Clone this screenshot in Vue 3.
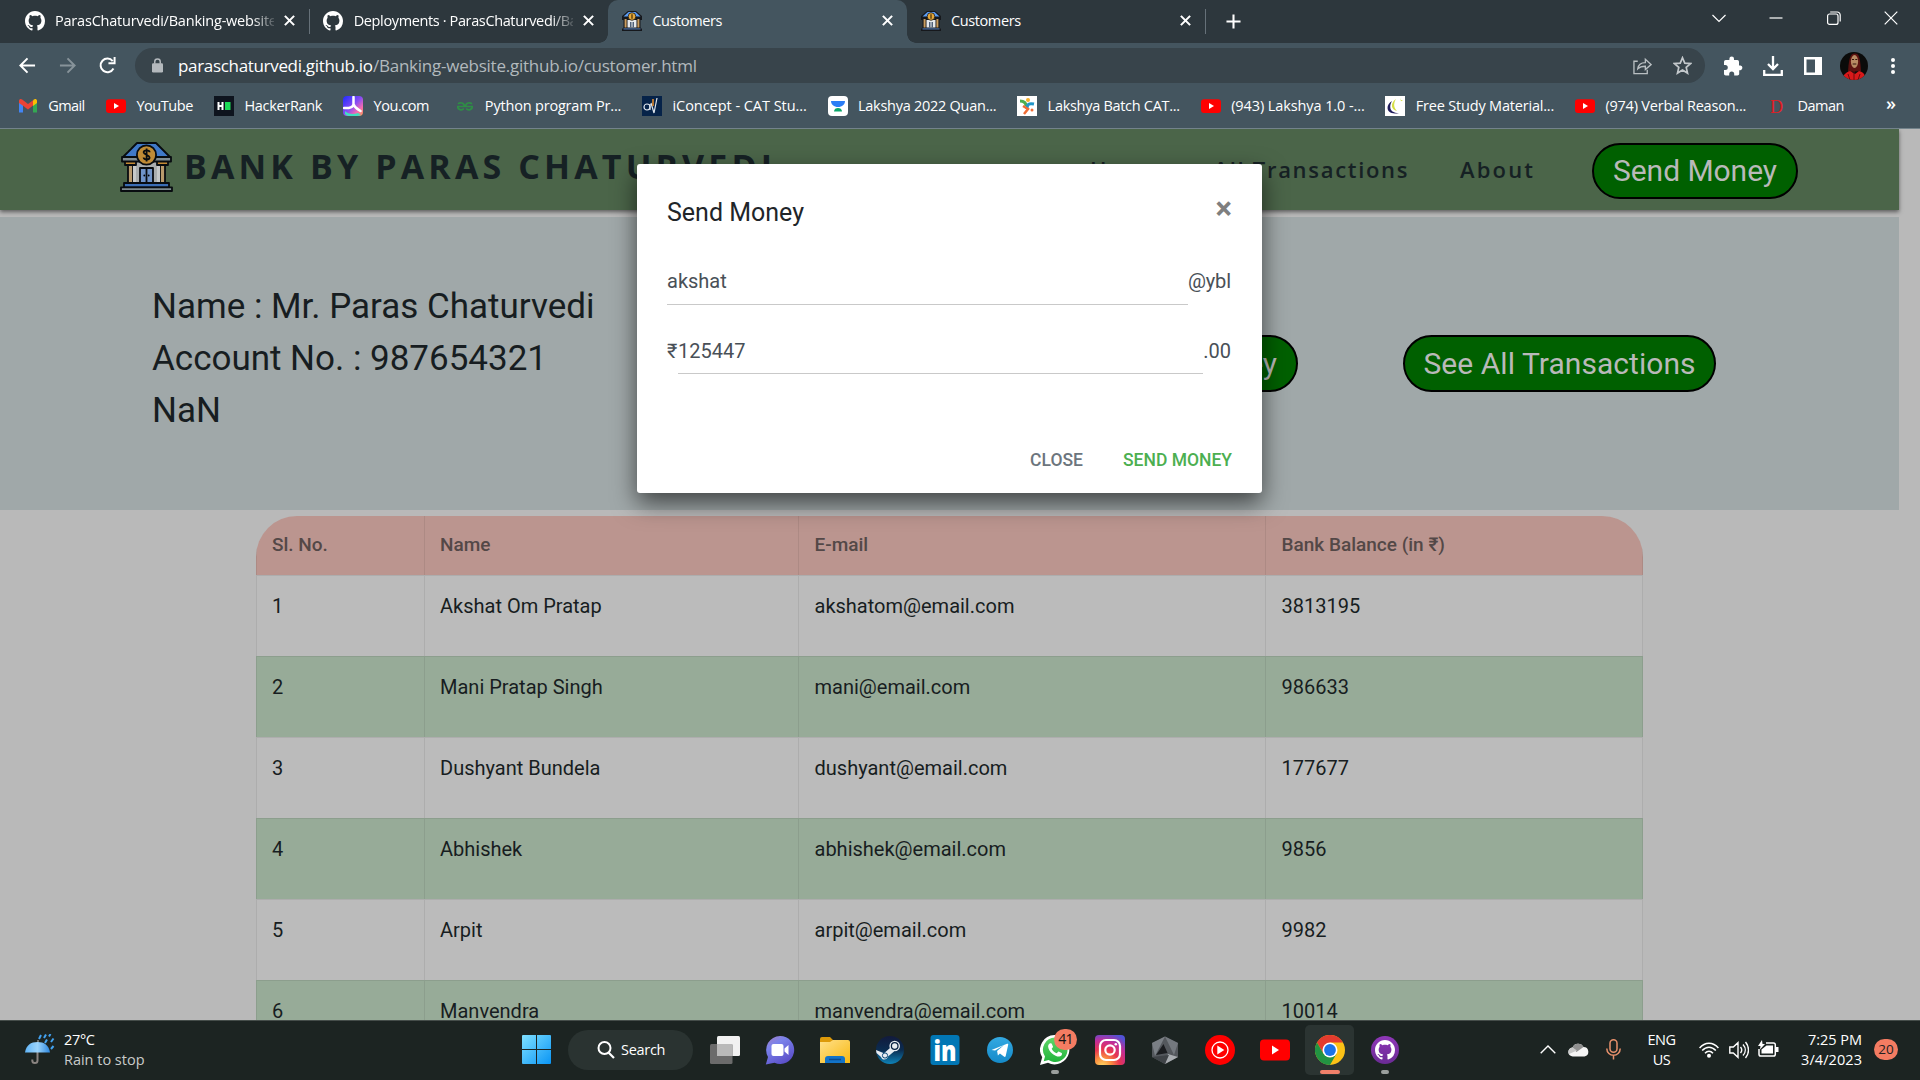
<script setup>
import { nextTick } from 'vue'

// Tracks a label so that its text takes exactly the given width.
const vFit = {
  mounted(el, { value }) {
    nextTick(() => {
      const count = [...el.textContent].length
      const width = el.getBoundingClientRect().width
      const spacing = (value - width) / (count - 1)
      el.style.letterSpacing = `${spacing}px`
      el.style.marginRight = `${-spacing}px`
    })
  },
}

const tabs = [
  { icon: 'github', title: 'ParasChaturvedi/Banking-website', cut: true, w: 222 },
  { icon: 'github', title: 'Deployments · ParasChaturvedi/Ba', cut: true, w: 224 },
  { icon: 'bankfav', title: 'Customers', active: true, w: 70 },
  { icon: 'bankfav', title: 'Customers', w: 70 },
]

const bookmarks = [
  { icon: 'gmail', text: 'Gmail', w: 37 },
  { icon: 'youtube', text: 'YouTube', w: 57 },
  { icon: 'hacker', text: 'HackerRank', w: 78 },
  { icon: 'you', text: 'You.com', w: 56 },
  { icon: 'gfg', text: 'Python program Pr...', w: 136.5 },
  { icon: 'iconcept', text: 'iConcept - CAT Stu...', w: 134.5 },
  { icon: 'unacademy', text: 'Lakshya 2022 Quan...', w: 138.5 },
  { icon: 'cracku', text: 'Lakshya Batch CAT...', w: 132.5 },
  { icon: 'youtube', text: '(943) Lakshya 1.0 -...', w: 133.5 },
  { icon: 'study', text: 'Free Study Material...', w: 138.5 },
  { icon: 'youtube', text: '(974) Verbal Reason...', w: 141 },
  { icon: 'daman', text: 'Daman', w: 47 },
]

const rows = [
  ['1', 'Akshat Om Pratap', 'akshatom@email.com', '3813195'],
  ['2', 'Mani Pratap Singh', 'mani@email.com', '986633'],
  ['3', 'Dushyant Bundela', 'dushyant@email.com', '177677'],
  ['4', 'Abhishek', 'abhishek@email.com', '9856'],
  ['5', 'Arpit', 'arpit@email.com', '9982'],
  ['6', 'Manvendra', 'manvendra@email.com', '10014'],
]

const apps = ['taskview', 'chat', 'folder', 'steam', 'linkedin', 'telegram', 'whatsapp', 'instagram', 'armoury', 'ytmusic', 'ytbig', 'chrome', 'ghdesk']
</script>

<template>
  <div class="screen">
    <svg class="defs" width="0" height="0" aria-hidden="true">
      <defs>
        <linearGradient id="gWin" x1="0" y1="0" x2="1" y2="1"><stop offset="0" stop-color="#7fe0ff" /><stop offset="1" stop-color="#0a95f5" /></linearGradient>
        <linearGradient id="gChat" x1="0" y1="0" x2=".6" y2="1"><stop offset="0" stop-color="#a77fc0" /><stop offset=".35" stop-color="#7b83eb" /><stop offset="1" stop-color="#5b4fc9" /></linearGradient>
        <linearGradient id="gFold" x1="0" y1="0" x2="1" y2="1"><stop offset="0" stop-color="#ffe08a" /><stop offset="1" stop-color="#f8b912" /></linearGradient>
        <linearGradient id="gSteam" x1="0" y1="0" x2="0" y2="1"><stop offset="0" stop-color="#121a3c" /><stop offset=".5" stop-color="#0b2c50" /><stop offset="1" stop-color="#0e83b9" /></linearGradient>
        <linearGradient id="gTele" x1="0" y1="0" x2="0" y2="1"><stop offset="0" stop-color="#33a9e2" /><stop offset="1" stop-color="#158ac9" /></linearGradient>
        <linearGradient id="gWa" x1="0" y1="0" x2="0" y2="1"><stop offset="0" stop-color="#5fd668" /><stop offset="1" stop-color="#22b43c" /></linearGradient>
        <radialGradient id="gInsta" cx=".25" cy="1.05" r="1.15"><stop offset="0" stop-color="#ffdd66" /><stop offset=".25" stop-color="#fb9140" /><stop offset=".5" stop-color="#e8354f" /><stop offset=".75" stop-color="#c42d97" /><stop offset="1" stop-color="#5252d6" /></radialGradient>
        <linearGradient id="gGh" x1="0" y1="0" x2="0" y2="1"><stop offset="0" stop-color="#8f37b8" /><stop offset="1" stop-color="#6a2b94" /></linearGradient>
        <linearGradient id="gYou" x1="0" y1="0" x2="1" y2="1"><stop offset="0" stop-color="#1d2bff" /><stop offset=".5" stop-color="#8a4df2" /><stop offset=".75" stop-color="#f46bb0" /><stop offset="1" stop-color="#ff9a4d" /></linearGradient>
        <linearGradient id="gUmb" x1="0" y1="0" x2="1" y2="0"><stop offset="0" stop-color="#5fb4f7" /><stop offset=".5" stop-color="#9bd4fc" /><stop offset="1" stop-color="#2c87e0" /></linearGradient>
      </defs>

      <symbol id="github" viewBox="0 0 16 16"><path fill="#fff" d="M8 0C3.58 0 0 3.58 0 8c0 3.54 2.29 6.53 5.47 7.59.4.07.55-.17.55-.38 0-.19-.01-.82-.01-1.49-2.01.37-2.53-.49-2.69-.94-.09-.23-.48-.94-.82-1.13-.28-.15-.68-.52-.01-.53.63-.01 1.08.58 1.23.82.72 1.21 1.87.87 2.33.66.07-.52.28-.87.51-1.07-1.78-.2-3.64-.89-3.64-3.95 0-.87.31-1.59.82-2.15-.08-.2-.36-1.02.08-2.12 0 0 .67-.21 2.2.82.64-.18 1.32-.27 2-.27.68 0 1.36.09 2 .27 1.53-1.04 2.2-.82 2.2-.82.44 1.1.16 1.92.08 2.12.51.56.82 1.27.82 2.15 0 3.07-1.87 3.75-3.65 3.95.29.25.54.73.54 1.48 0 1.07-.01 1.93-.01 2.2 0 .21.15.46.55.38A8.013 8.013 0 0016 8c0-4.42-3.58-8-8-8z" /></symbol>

      <symbol id="bank" viewBox="0 0 53 51">
        <g stroke="#080c10" stroke-width="1.8" stroke-linejoin="round">
          <path fill="#4079c8" d="M3 16 17 2h19l14 14z" />
          <path fill="#a9adae" d="M12 20h29v22H12z" />
          <path fill="#b99a6c" d="M8 24h5v18H8zM40 24h5v18h-5z" />
          <path fill="#c6c9c9" d="M13 24h3v18h-3zM37 24h3v18h-3z" stroke="none" />
          <path fill="#c48a35" d="M5 20h11v4H5zM37 20h11v4H37z" />
          <path fill="#7f8c92" d="M2 16h49v4.500H2z" />
          <path fill="#6f93c8" d="M20 27h6.500v15H20zM26.500 27H33v15h-6.500z" />
          <path fill="#3a6db5" d="M4 42h45v4.500H4z" />
          <path fill="#7f8c92" d="M1 46.300h51V50H1z" />
          <circle cx="26.500" cy="14" r="9.600" fill="#bf8b36" />
        </g>
        <path d="M10 6 6 10" stroke="#4b6549" stroke-width="2.200" stroke-dasharray="2 2" />
        <path d="M29.600 11.300c0-2.600-6-2.600-6 0s6 2.600 6 5.200-6 2.600-6 0M26.600 7.600v12.800" fill="none" stroke="#080c10" stroke-width="1.800" />
        <circle cx="24.300" cy="34.500" r=".9" /><circle cx="28.700" cy="34.500" r=".9" />
      </symbol>

      <symbol id="bankfav" viewBox="0 0 20 20">
        <path fill="#16181c" d="M6 0h8l6 5v4h-1.500v7.500L20 18v2H0v-2l1.500-1.500V9H0V5z" />
        <path fill="#5b9cf2" d="M6.500 1h7l5 4.500h-17z" />
        <path fill="#e6e9ec" d="M5.500 9h9v7.500h-9z" />
        <path fill="#c99b5c" d="M2.600 8h2v8.500h-2zM15.400 8h2v8.500h-2z" />
        <path fill="#4f6078" d="M8 11h1.500v5.500H8zM10.500 11H12v5.500h-1.500z" />
        <path fill="#4a6fa5" d="M1.500 17.300h17v1.200h-17z" />
        <circle cx="10" cy="5.500" r="3.800" fill="#e7a93a" stroke="#16181c" stroke-width=".8" />
        <path d="M10 3.300v4.400" stroke="#4a3208" stroke-width="1.300" />
      </symbol>

      <symbol id="gmail" viewBox="0 0 20 20"><path d="M1 5v11.500h4V9z" fill="#4285f4" /><path d="M19 5v11.500h-4V9z" fill="#34a853" /><path d="M15 4.500V10l4-3V4.800C19 3 17 2.500 15.800 3.500z" fill="#fbbc04" /><path d="M1 7V4.800C1 3 3 2.500 4.200 3.500L10 8l5-3.800V9.500l-5 3.900L5 9.700z" fill="#ea4335" /></symbol>
      <symbol id="youtube" viewBox="0 0 20 20"><rect y="3.200" width="20" height="13.800" rx="3" fill="#f00" /><path d="M8 7v6l5-3z" fill="#fff" /></symbol>
      <symbol id="hacker" viewBox="0 0 20 20"><path d="M0 0h20v20H0z" fill="#0e141e" /><path d="M3.500 6h2v3h2V6h2v8h-2v-3h-2v3h-2z" fill="#fff" /><path d="M11 6h5.500v8H11z" fill="#1ddb57" /></symbol>
      <symbol id="you" viewBox="0 0 20 20"><rect width="20" height="20" rx="4" fill="url(#gYou)" /><path d="M2 15c3 3 8 4 13 2l3 2c-4 2-14 2-16-1z" fill="#3fe0c0" /><path d="M10.500 1v7c0 3-4 4.500-9.500 4M10.500 8c1 4 4 5 7 7" stroke="#fff" stroke-width="2.500" fill="none" stroke-linecap="round" /></symbol>
      <symbol id="gfg" viewBox="0 0 20 20"><path d="M2 10.500h16M8.800 12.500c-2 2.600-6.300 1-6-2M3 7.800c2-1.600 6.400-1.400 6.400 2.700M11.200 12.500c2 2.600 6.300 1 6-2M17 7.800c-2-1.600-6.400-1.400-6.400 2.700" fill="none" stroke="#2f8d46" stroke-width="1.700" /></symbol>
      <symbol id="iconcept" viewBox="0 0 20 20"><path d="M0 0h20v20H0z" fill="#062349" /><circle cx="5" cy="11" r="3" fill="none" stroke="#dfe6ee" stroke-width="1.200" /><path d="M8 8v6M9 7l3 10 3-15" fill="none" stroke="#dfe6ee" stroke-width="1.200" /><path d="M11 3v7" stroke="#e08a2c" stroke-width="1.600" /></symbol>
      <symbol id="unacademy" viewBox="0 0 20 20"><rect width="20" height="20" rx="4" fill="#fff" /><path d="M3 5h14c0 3.500-3 6-7 6S3 8.500 3 5z" fill="#2b7df5" /><path d="M6 15.500c0-2.500 2-3.500 4-3.500s4 1 4 3.500z" fill="#0aa66a" /></symbol>
      <symbol id="cracku" viewBox="0 0 20 20"><path d="M0 0h20v20H0z" fill="#fff" /><path d="M3 5c4 0 6 2 6 5" stroke="#4caf50" stroke-width="3" fill="none" /><path d="M17 8c-5-1-7 0-7 5" stroke="#2196c9" stroke-width="3" fill="none" /><path d="m6 10 5 3-4 5" stroke="#ef6c35" stroke-width="2.500" fill="none" /><circle cx="11" cy="4" r="2" fill="#f6b22c" /><circle cx="15" cy="14" r="1.500" fill="#ef6c35" /></symbol>
      <symbol id="study" viewBox="0 0 20 20"><path d="M0 0h20v20H0z" fill="#fff" /><path d="M7 5C-1 10 2 20 14 17 6 17 3 12 7 5z" fill="#201d5c" /><path d="M11 3c-6 4-5 11 1 12-3-3-4-7-1-12z" fill="#d5de42" /><path d="m15 2 1 2 2 .3-2 1" fill="#d5de42" /></symbol>
      <symbol id="daman" viewBox="0 0 20 20"><text x="3" y="16.500" font-family="Liberation Serif, serif" font-size="18" fill="#e31e24">D</text></symbol>

      <symbol id="taskview" viewBox="0 0 30 30"><rect x="7" y="1" width="23" height="20" rx="1.500" fill="#f1f1f1" /><rect x="0" y="9" width="22.500" height="20" rx="1.500" fill="#6b6b6b" /><path d="M7 9h15.500v12H7z" fill="#b9b9b9" /></symbol>
      <symbol id="chat" viewBox="0 0 30 30"><path d="M15 1a14 14 0 1 1-5.500 26.800L.8 29.500 3 22A14 14 0 0 1 15 1z" fill="url(#gChat)" /><rect x="6.500" y="9" width="12" height="12" rx="2" fill="#fff" /><path d="m19.500 13.500 4-3.500v10l-4-3.500z" fill="#fff" /></symbol>
      <symbol id="folder" viewBox="0 0 30 30"><path d="M0 4a2 2 0 0 1 2-2h8l3 3h5v8H0z" fill="#dd9a0a" /><path d="M0 7h10l3-2h15a2 2 0 0 1 2 2v21H0z" fill="url(#gFold)" /><path d="M5 28v-4a3 3 0 0 1 3-3h14a3 3 0 0 1 3 3v4z" fill="#1273c8" /><path d="M9 24.500h12" stroke="#0a4b90" stroke-width="1.500" /></symbol>
      <symbol id="steam" viewBox="0 0 30 30"><circle cx="15" cy="15" r="14" fill="url(#gSteam)" /><path d="m1 15 8 3.300 6-5.300 5-2-1 5.500-6 5c-1 4-6 4-7 .5L1.500 18z" fill="#e9edf2" /><circle cx="19.700" cy="11" r="5.300" fill="#e9edf2" /><circle cx="19.700" cy="11" r="3.300" fill="#e9edf2" stroke="#0b2444" stroke-width="1.300" /><circle cx="10" cy="20.500" r="2.600" fill="none" stroke="#0d4a78" stroke-width="1" /></symbol>
      <symbol id="linkedin" viewBox="0 0 30 30"><rect x=".5" width="29" height="30" rx="3" fill="#0277b5" /><text x="3.500" y="25.500" font-family="Open Sans, sans-serif" font-weight="800" font-size="28" textLength="23" lengthAdjust="spacingAndGlyphs" fill="#fff">in</text></symbol>
      <symbol id="telegram" viewBox="0 0 30 30"><circle cx="15" cy="15" r="13" fill="url(#gTele)" /><path d="m6.500 15 15.500-6.200c1-.3 1.400.2 1.200 1L20.700 21c-.3 1-1 1.200-1.800.6l-4-3-2 2-.8-4.600 7-6-9 5.500z" fill="#fff" /></symbol>
      <symbol id="whatsapp" viewBox="0 0 30 30"><path d="M15 0a14.700 14.700 0 1 1-7 27.800L0 30l2.200-7.700A14.700 14.700 0 0 1 15 0z" fill="#fff" /><path d="M15 2.600A12.200 12.200 0 1 1 8.600 25L3.700 26.300 5 21.500A12.200 12.200 0 0 1 15 2.600z" fill="url(#gWa)" /><path d="M10.500 8.200c.8 0 1.200.1 1.500 1l1 2.600c.1.500-1 1.600-1.300 2 .9 2 2.800 3.600 4.900 4.500.6-.3 1.500-2 2.100-1.900l3 1.500c.6.300.2 2-.3 2.700-3 3.400-13-3-13.300-9.200.1-1.700 1.100-3.200 2.400-3.200z" fill="#fff" /></symbol>
      <symbol id="instagram" viewBox="0 0 30 30"><rect width="30" height="30" rx="4" fill="url(#gInsta)" /><rect x="5" y="5" width="20" height="20" rx="6" fill="none" stroke="#fff" stroke-width="2.200" /><circle cx="15" cy="15" r="4.700" fill="none" stroke="#fff" stroke-width="2.200" /><circle cx="20.800" cy="9.300" r="1.300" fill="#fff" /></symbol>
      <symbol id="armoury" viewBox="0 0 30 30"><path d="M15 1.500 28 8v14l-13 7L2 22V8z" fill="#54585d" /><path d="M15 1.500 28 8l-4 12z" fill="#74797f" /><path d="M2 8 15 1.500 5 21z" fill="#7a7f85" /><path d="m15 29 13-7-10-3z" fill="#a9adb1" /><path d="M13.500 9 6 20l11.500-2z" fill="#1b1d20" /><path d="M2 22 15 29l4-9z" fill="#3f4347" /></symbol>
      <symbol id="ytmusic" viewBox="0 0 30 30"><circle cx="15" cy="15" r="15" fill="#f00" /><circle cx="15" cy="15" r="8" fill="none" stroke="#fff" stroke-width="1.300" /><path d="M12.300 10.500v9l7-4.500z" fill="#fff" /></symbol>
      <symbol id="ytbig" viewBox="0 0 30 30"><rect y="4.500" width="30" height="21" rx="4" fill="#f00" /><path d="M12 10.500v9l7-4.500z" fill="#fff" /></symbol>
      <symbol id="chrome" viewBox="0 0 30 30"><circle cx="15" cy="15" r="15" fill="#fbc116" /><path d="M2 7.500A15 15 0 0 1 28 7.500H15L8.500 18.700z" fill="#e33b2e" /><path d="M2 7.500A15 15 0 0 0 15 30l6.500-11.300L15 15l-6.500 3.700z" fill="#229342" /><circle cx="15" cy="15" r="7.500" fill="#fff" /><circle cx="15" cy="15" r="5.900" fill="#1a73e8" /></symbol>
      <symbol id="ghdesk" viewBox="0 0 30 30"><circle cx="15" cy="15" r="14" fill="url(#gGh)" /><svg x="5" y="5" width="20" height="20" viewBox="0 0 16 16"><use href="#github" /></svg></symbol>
    </svg>

    <header class="tabstrip">
      <div v-for="(t, i) in tabs" :key="i" class="tab" :class="{ active: t.active, parted: i === 0 || i === 3 }">
        <svg class="fav"><use :href="'#' + t.icon" /></svg>
        <div class="tab-title" :class="{ cut: t.cut }"><span v-fit="t.w" class="fit">{{ t.title }}</span></div>
        <svg class="tab-x" viewBox="0 0 10 10"><path d="m.8.8 8.400 8.400M9.200.8.8 9.200" stroke="#fff" stroke-width="1.900" /></svg>
      </div>
      <svg class="plus" viewBox="0 0 16 16"><path d="M8 .5v15M.5 8h15" stroke="#fff" stroke-width="2.200" /></svg>
      <div class="winctl">
        <svg width="14" height="14" viewBox="0 0 14 14"><path d="m.5 4 6.500 6.500L13.500 4" /></svg>
        <svg width="14" height="14" viewBox="0 0 14 14"><path d="M.5 7h13" /></svg>
        <svg width="14" height="14" viewBox="0 0 14 14"><rect x=".6" y="3" width="10.400" height="10.400" rx="2" /><path d="M3.200 1h7a3 3 0 0 1 3 3v6.500" /></svg>
        <svg width="14" height="14" viewBox="0 0 14 14"><path d="m.7.7 12.600 12.600M13.300.7.7 13.300" /></svg>
      </div>
    </header>

    <section class="toolbar">
      <div class="navbar">
        <svg class="nav-ic" viewBox="0 0 18 18"><path d="M17 9H2M9 1.500 1.500 9 9 16.500" /></svg>
        <svg class="nav-ic off" viewBox="0 0 18 18"><path d="M1 9h15M9 1.500 16.500 9 9 16.500" /></svg>
        <svg class="nav-ic" viewBox="0 0 18 18"><path d="M15.300 12.200A7.200 7.200 0 1 1 14.500 4.300M16.500 0v6.500H10" /></svg>
        <div class="omnibox">
          <svg class="lock" viewBox="0 0 12 16"><rect y="5.500" width="12" height="10" rx="1.300" fill="#b4b9bd" /><path d="M3 6V4a3 3 0 0 1 6 0v2" fill="none" stroke="#b4b9bd" stroke-width="1.600" /></svg>
          <div class="url"><span v-fit="195" class="fit host">paraschaturvedi.github.io</span><span v-fit="324" class="fit">/Banking-website.github.io/customer.html</span></div>
          <svg class="share" viewBox="0 0 20 18"><path d="M5 4H1v13h14v-4M5 12c.5-4 3-6.500 8-6.500V2l6 5.500-6 5.200V9.300c-4 0-6 .7-8 2.700z" /></svg>
          <svg class="star" viewBox="0 0 20 20"><path d="m10 1.800 2.400 5.700 6.100.5-4.600 4 1.400 6-5.300-3.200L4.700 18l1.400-6L1.500 8l6.100-.5z" /></svg>
        </div>
        <svg class="t-ic" viewBox="0 0 20 20"><path fill="#fff" d="M17.500 9.500H16V5.800A1.800 1.800 0 0 0 14.300 4H11V2.700a2.300 2.300 0 0 0-4.600 0V4H2.800A1.800 1.800 0 0 0 1 5.800v3.300h1.300a2.500 2.500 0 0 1 0 5H1v3.600c0 1 .8 1.700 1.800 1.700h3.400V18a2.500 2.500 0 0 1 5 0v1.400h3.200c1 0 1.800-.7 1.800-1.700v-3.500h1.300a2.400 2.400 0 0 0 0-4.700z" /></svg>
        <svg class="t-ic" viewBox="0 0 20 20"><path d="M10 0v12M5 8l5 5 5-5M1.200 14v4.800h17.600V14" fill="none" stroke="#fff" stroke-width="2.300" /></svg>
        <svg class="t-ic" viewBox="0 0 20 20"><path fill="#fff" fill-rule="evenodd" d="M1 1h18v18H1zm2.500 2.500v13H12v-13z" /></svg>
        <svg class="avatar" viewBox="0 0 28 28"><defs><clipPath id="avc"><circle cx="14" cy="14" r="14" /></clipPath></defs><g clip-path="url(#avc)"><path d="M0 0h28v28H0z" fill="#0b0b0a" /><path d="M8 20C9 4 11 1.500 15 1.500S20 5 21 19z" fill="#5c1210" /><path d="M2 28c1-6 5-8 8-9l5 3 4-3c5 1 6 4 7 9z" fill="#d8191a" /><ellipse cx="14.500" cy="9.500" rx="3.600" ry="6.500" fill="#b78a63" /><path d="M12 7.500h2M15.300 7.500h2M12.700 12h3.600" stroke="#33150d" stroke-width="1.200" /><path d="M14 18v10M8 22l2 6M20 22l-2 6" stroke="#6d0c0c" /></g></svg>
        <svg class="dots" viewBox="0 0 4 18"><circle cx="2" cy="3" r="2" /><circle cx="2" cy="9" r="2" /><circle cx="2" cy="15" r="2" /></svg>
      </div>
      <div class="bookmarks">
        <div v-for="(b, i) in bookmarks" :key="i" class="bm">
          <svg class="bm-ic"><use :href="'#' + b.icon" /></svg>
          <span v-fit="b.w" class="fit">{{ b.text }}</span>
        </div>
        <span class="more">»</span>
      </div>
    </section>

    <main class="page">
      <nav class="site">
        <svg class="logo"><use href="#bank" /></svg>
        <span v-fit="588" class="fit brand">BANK BY PARAS CHATURVEDI</span>
        <div class="links">
          <span v-fit="71" class="fit">Home</span>
          <span v-fit="194" class="fit">All Transactions</span>
          <span v-fit="73" class="fit">About</span>
        </div>
        <div class="pill small"><span v-fit="164" class="fit">Send Money</span></div>
      </nav>

      <section class="hero">
        <div class="owner">
          <div><span v-fit="442.500" class="fit">Name : Mr. Paras Chaturvedi</span></div>
          <div><span v-fit="395" class="fit">Account No. : 987654321</span></div>
          <div><span v-fit="69" class="fit">NaN</span></div>
        </div>
        <div class="hero-actions">
          <div class="pill small"><span v-fit="164" class="fit">Send Money</span></div>
          <div class="pill wide"><span v-fit="272" class="fit">See All Transactions</span></div>
        </div>
      </section>

      <div class="table">
        <div class="tr th"><span>Sl. No.</span><span>Name</span><span>E-mail</span><span>Bank Balance (in ₹)</span></div>
        <div v-for="r in rows" :key="r[0]" class="tr"><span v-for="c in r" :key="c">{{ c }}</span></div>
      </div>

      <div class="modal">
        <div class="m-head"><span v-fit="137" class="fit">Send Money</span><span class="m-x">×</span></div>
        <div class="m-row"><span class="line">akshat</span><span v-fit="43" class="fit">@ybl</span></div>
        <div class="m-row second"><span class="rs">₹</span><span class="line">125447</span><span class="amt-end">.00</span></div>
        <div class="m-foot"><span v-fit="53" class="fit">CLOSE</span><span v-fit="109" class="fit go">SEND MONEY</span></div>
      </div>
    </main>

    <footer class="taskbar">
      <div class="weather">
        <svg width="30" height="31" viewBox="0 0 30 31"><path d="M13 6v3" stroke="#888" stroke-width="1.500" /><path d="M12.500 17v9.500a2.600 2.600 0 0 1-5.200 0v-1" fill="none" stroke="#8a8481" stroke-width="2" /><path d="M0 18.500C1 11 6 8 12.500 8S24 11 25 18.500z" fill="url(#gUmb)" /><path d="m14 5 2-4M19 4l2-3.500M24 2.500 25.500 0M20 9l2-3.500M26 8l2.500-3.500M26 15l2.500-3" stroke="#43a2f0" stroke-width="2" /></svg>
        <div class="w-text"><span v-fit="31" class="fit">27°C</span><span v-fit="80.500" class="fit dim">Rain to stop</span></div>
      </div>
      <svg class="win" viewBox="0 0 29 29"><path fill="url(#gWin)" d="M0 1a1 1 0 0 1 1-1h13v14H0zM15 0h13a1 1 0 0 1 1 1v13H15zM0 15h14v14H1a1 1 0 0 1-1-1zM15 15h14v13a1 1 0 0 1-1 1H15z" /></svg>
      <div class="search">
        <svg width="18" height="18" viewBox="0 0 18 18"><circle cx="7.500" cy="7" r="6" fill="none" stroke="#fff" stroke-width="2" /><path d="m11.500 11.500 5.500 5.500" stroke="#fff" stroke-width="2.200" /></svg>
        <span v-fit="44.5" class="fit">Search</span>
      </div>
      <div class="apps">
        <div v-for="a in apps" :key="a" class="app" :class="a">
          <svg width="30" height="30"><use :href="'#' + a" /></svg>
          <span v-if="a === 'whatsapp'" class="count">41</span>
          <i v-if="a === 'whatsapp' || a === 'ghdesk' || a === 'chrome'" class="dot" />
        </div>
      </div>
      <div class="tray">
        <svg class="chev" width="16" height="9" viewBox="0 0 16 9"><path d="M.7 8.300 8 1l7.300 7.300" fill="none" stroke="#fff" stroke-width="1.400" /></svg>
        <svg class="cloud" width="21" height="14" viewBox="0 0 21 14"><path d="M5 13.500a4.500 4.500 0 0 1-.5-9A6 6 0 0 1 15.500 4a4.800 4.800 0 0 1 1 9.500z" fill="#f5f5f5" /><path d="M4.500 4.500A6 6 0 0 1 15.500 4l-7 5z" fill="#8f8f8f" /><path d="m1 11 8-3.500L4.500 4.500C1 5 0 8 1 11z" fill="#c8c8c8" /></svg>
        <svg class="mic" width="15" height="21" viewBox="0 0 15 21"><g fill="none" stroke="#e8916c" stroke-width="1.500"><rect x="4" y=".8" width="7" height="12.500" rx="3.500" /><path d="M.8 9.500c0 9 13.400 9 13.400 0M7.500 16.300V20.500" /></g></svg>
        <div class="lang"><span v-fit="28.5" class="fit">ENG</span><span v-fit="18" class="fit">US</span></div>
        <svg class="wifi" width="20" height="16" viewBox="0 0 20 16"><g fill="none" stroke="#fff" stroke-width="1.500"><path d="M.6 6C6-.4 14-.4 19.400 6M3.200 8.600c4-4.600 9.600-4.600 13.600 0M6 11.200c2.400-2.600 5.600-2.600 8 0" /></g><circle cx="10" cy="13.700" r="2" fill="#fff" /></svg>
        <svg class="vol" width="20" height="18" viewBox="0 0 20 18"><g fill="none" stroke="#fff" stroke-width="1.400"><path d="M.8 6v6h3.500L9 16.300V1.700L4.300 6zM11.500 6c1.500 1.800 1.500 4.200 0 6M14 3.500c3 3.300 3 7.700 0 11M16.500 1c4 4.600 4 11.400 0 16" /></g></svg>
        <svg class="bat" width="21" height="17" viewBox="0 0 21 17"><path d="M8 3h7.500A1.800 1.800 0 0 1 17.300 4.800v9.400a1.800 1.800 0 0 1-1.800 1.800H2.800A1.800 1.800 0 0 1 1 14.200V9" fill="none" stroke="#fff" stroke-width="1.500" /><path d="M18 7h2.500v5H18zM8.500 5.500H15v8H3.500v-4z" fill="#fff" /><path d="M4 0 0 6h2.500L2 9.500 7 4H4.500z" fill="#fff" /></svg>
        <div class="clock"><span v-fit="54" class="fit">7:25 PM</span><span v-fit="61" class="fit">3/4/2023</span></div>
        <span class="notif">20</span>
      </div>
    </footer>
  </div>
</template>

<style>
body { margin: 0; }
</style>

<style scoped>
.screen {
  display: flex;
  flex-direction: column;
  width: 1920px;
  height: 1080px;
  overflow: hidden;
  font-family: "Open Sans", "Noto Sans", sans-serif;
  font-size: 14.5px;
  color: #fff;
}
.defs { position: absolute; }
svg { display: block; flex: none; }
.fit { display: inline-block; flex: none; white-space: nowrap; }

/* Tab strip */
.tabstrip { display: flex; height: 43px; flex: none; background: #2d373d; padding-left: 11px; box-sizing: border-box; }
.tab { display: flex; align-items: center; box-sizing: border-box; width: 298.7px; flex: none; padding: 0 14.500px 2px 13.500px; position: relative; }
.tab.active { background: #44555f; border-radius: 10px 10px 0 0; }
.tab.active::before, .tab.active::after { content: ""; position: absolute; bottom: 0; width: 9px; height: 9px; }
.tab.active::before { left: -9px; background: radial-gradient(circle at 0 0, transparent 8.500px, #44555f 9px); }
.tab.active::after { right: -9px; background: radial-gradient(circle at 100% 0, transparent 8.500px, #44555f 9px); }
.tab.parted::after { content: ""; position: absolute; right: 0; top: 9px; width: 1px; height: 25px; background: #667179; }
.fav { width: 20px; height: 20px; }
.tab-title { flex: 1; overflow: hidden; margin-left: 10.500px; margin-right: 10px; height: 24px; line-height: 24px; }
.cut { mask-image: linear-gradient(90deg, #000 90%, transparent 102%); }
.tab-x { width: 11px; height: 11px; }
.plus { width: 15px; height: 15px; margin: 14px 0 0 20px; }
.winctl { margin-left: auto; display: flex; gap: 43.500px; padding: 11px 22px 0 0; fill: none; stroke: #fff; stroke-width: 1.200; }

/* Toolbar */
.toolbar { height: 86px; flex: none; background: #44555f; border-bottom: 1px solid #73838b; box-sizing: border-box; }
.navbar { display: flex; align-items: center; height: 45px; padding-left: 19px; }
.nav-ic { width: 17px; height: 17px; margin-right: 23px; fill: none; stroke: #fff; stroke-width: 2.100; }
.off { stroke: #87939a; }
.omnibox { display: flex; align-items: center; box-sizing: border-box; width: 1570px; height: 35px; border-radius: 18px; background: #38444b; margin-left: -4px; padding: 0 13px 0 17px; flex: none; }
.lock { width: 11px; height: 15px; }
.url { display: flex; margin-left: 15px; font-size: 17px; color: #b2b9bd; flex: 1; margin-top: -1px; }
.host { color: #fff; }
.share { width: 19px; height: 18px; margin-right: 21px; fill: none; stroke: #b9bfc2; stroke-width: 1.400; }
.star { width: 19px; height: 19px; fill: none; stroke: #c3c8cb; stroke-width: 1.800; }
.t-ic { width: 20px; height: 20px; margin-left: 20px; }
.omnibox + .t-ic { margin-left: 17.500px; }
.avatar { width: 28px; height: 28px; margin-left: 17px; }
.dots { width: 4px; height: 18px; margin-left: 23px; fill: #fff; }
.bookmarks { display: flex; align-items: center; height: 36px; padding-left: 18px; }
.bm { display: flex; align-items: center; gap: 10.300px; margin-right: 20.800px; }
.bm .fit { margin-top: -2px; }
.bm:nth-child(4) { margin-right: 25px; }
.bm-ic { width: 20px; height: 20px; }
.more { margin: -6px 24px 0 auto; font-size: 18px; font-weight: 600; }

/* Page */
.page { position: relative; height: 891px; flex: none; overflow: hidden; background: #b9b9b9; font-family: Roboto, sans-serif; color: #171d21; }
.site { display: flex; align-items: center; box-sizing: border-box; width: 1899px; height: 81px; padding: 0 101px 0 120px; background: #4b6549; color: #162124; box-shadow: 0 2px 4px rgba(0, 0, 0, .5); font-family: "Open Sans", sans-serif; }
.logo { width: 53px; height: 51px; margin-top: -6px; }
.brand { margin: -7px 0 0 11px; font-size: 34px; font-weight: 700; }
.links { display: flex; gap: 52.500px; margin: -2px 0 0 auto; font-size: 22px; font-weight: 600; }
.pill { display: flex; align-items: center; justify-content: center; box-sizing: border-box; height: 57px; border: 2px solid #000; border-radius: 28.500px; background: #006000; color: #b9b9b9; font: 30px Roboto, sans-serif; }
.small { width: 206px; }
.wide { width: 313px; }
.site .pill { height: 56px; margin: 2px 0 0 59px; }
.hero { display: flex; justify-content: space-between; align-items: center; box-sizing: border-box; width: 1899px; height: 293px; margin-top: 7px; padding: 0 183px 0 152px; background: #a0a8a9; }
.owner { font-size: 35px; line-height: 52px; margin-top: -10px; }
.hero-actions { display: flex; gap: 105px; }
.table { width: 1387px; margin: 6px 0 0 256px; font-size: 20px; line-height: 30px; border-radius: 41px 41px 0 0; overflow: hidden; background: #bbb; }
.tr { display: grid; grid-template-columns: 168px 374px 467px 378px; height: 81px; }
.tr span { box-sizing: border-box; padding: 15px 0 0 15px; border-left: 1px solid rgba(0, 0, 0, .07); border-top: 1px solid rgba(0, 0, 0, .07); }
.tr span:nth-child(n+3) { padding-left: 15.500px; }
.tr span:last-child { border-right: 1px solid rgba(0, 0, 0, .07); }
.tr:nth-child(odd):not(.th) { background: #97ab98; }
.th { height: 59px; background: #bb958f; color: #534847; font-size: 19px; font-weight: 500; }
.tr.th span { padding-top: 14px; border-top: 0; }

/* Dialog */
.modal { position: absolute; left: 637px; top: 35px; width: 625px; height: 329px; box-sizing: border-box; padding: 30px 31px 0 30px; background: #fff; border-radius: 3px; box-shadow: 0 10px 24px rgba(0, 0, 0, .6); color: #495057; font-size: 20px; }
.m-head { display: flex; justify-content: space-between; height: 38px; line-height: 38px; font-size: 25px; color: #212529; }
.m-x { font-size: 31px; font-weight: 700; color: #7f7f7f; line-height: 30px; margin-right: -1px; }
.m-row { display: flex; height: 48px; line-height: 49px; margin-top: 25px; }
.m-row.second { height: 47px; margin-top: 22px; }
.line { flex: 1; border-bottom: 1px solid #c9c9c9; box-sizing: border-box; }
.rs { width: 11px; }
.amt-end { width: 28px; text-align: right; }
.m-foot { display: flex; justify-content: flex-end; gap: 40px; margin: 69px -1px 0 0; line-height: 34px; font-size: 17.500px; font-weight: 500; color: #6c757d; }
.go { color: #4caf50; }

/* Taskbar */
.taskbar { display: flex; align-items: center; height: 60px; flex: none; box-sizing: border-box; background: #1c2422; border-top: 1px solid #454d4a; padding: 0 0 2px 25px; font-size: 14.500px; }
.weather { display: flex; align-items: center; gap: 9px; width: 497px; flex: none; }
.w-text, .lang, .clock { display: flex; flex-direction: column; line-height: 20px; }
.w-text { align-items: flex-start; }
.dim { color: #c9cbca; }
.win { width: 29px; height: 29px; }
.search { display: flex; align-items: center; gap: 6px; box-sizing: border-box; width: 125px; height: 40px; margin-left: 17px; padding-left: 29px; border-radius: 20px; background: #2a3331; flex: none; }
.apps { display: flex; gap: 6px; margin-left: 7px; }
.app { position: relative; display: flex; align-items: center; justify-content: center; width: 49px; height: 50px; flex: none; }
.app.chrome { background: #2b3432; border-radius: 5px; }
.dot { position: absolute; bottom: 1px; width: 8px; height: 4px; border-radius: 2px; background: #9a9f9d; }
.chrome .dot { width: 20px; background: #f0806a; }
.count { position: absolute; left: 24px; top: 4px; width: 23px; height: 21px; border-radius: 11px; background: #f47c62; color: #111; text-align: center; line-height: 20px; font-size: 14px; letter-spacing: -.8px; }
.tray { display: flex; align-items: center; margin-left: auto; padding-right: 22px; }
.cloud { margin-left: 12px; }
.mic { margin-left: 17px; }
.lang { align-items: center; margin-left: 27px; }
.wifi { margin-left: 23px; }
.vol { margin-left: 10px; }
.bat { margin-left: 9px; margin-top: -2px; }
.clock { align-items: flex-end; margin-left: 22px; }
.notif { width: 24px; height: 21px; border-radius: 12px; margin-left: 12px; background: #f47c62; color: #222; text-align: center; line-height: 20px; font-size: 13.500px; }
</style>
